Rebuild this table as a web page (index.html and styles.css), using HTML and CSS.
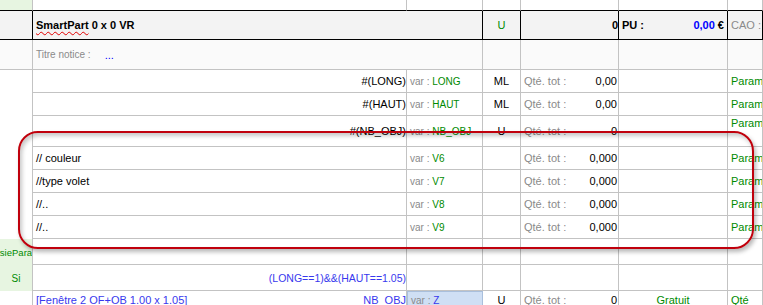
FILE: index.html
```html
<!DOCTYPE html>
<html>
<head>
<meta charset="utf-8">
<link rel="stylesheet" href="styles.css">
</head>
<body>
<div class="sheet">
  <!-- row 0 -->
  <div class="c r0 green"></div>
  <div class="c r0"></div>
  <div class="c r0"></div>
  <div class="c r0"></div>
  <div class="c r0"></div>
  <div class="c r0"></div>
  <div class="c r0"></div>

  <!-- row 1 -->
  <div class="c r1"></div>
  <div class="c r1 span2 title"><span class="squig">SmartPart</span>&nbsp;0 x 0 VR</div>
  <div class="c r1 center grn">U</div>
  <div class="c r1 right bold">0</div>
  <div class="c r1 pu"><span class="bold">PU :</span><span class="bold"><span class="blue">0,00</span> €</span></div>
  <div class="c r1 gray">CAO :</div>

  <!-- row 2 -->
  <div class="c r2"></div>
  <div class="c r2 span2"><span class="gray notice">Titre notice :</span><span class="blue dots">...</span></div>
  <div class="c r2"></div>
  <div class="c r2"></div>
  <div class="c r2"></div>
  <div class="c r2"></div>

  <!-- left column, rows 3-9 -->
  <div class="c lefta"></div>

  <!-- row 3 -->
  <div class="c right">#(LONG)</div>
  <div class="c var"><span class="gray">var :&nbsp;</span><span class="grn">LONG</span></div>
  <div class="c center">ML</div>
  <div class="c qty"><span class="gray">Qté. tot :</span><span>0,00</span></div>
  <div class="c"></div>
  <div class="c grn">Param</div>

  <!-- row 4 -->
  <div class="c right">#(HAUT)</div>
  <div class="c var"><span class="gray">var :&nbsp;</span><span class="grn">HAUT</span></div>
  <div class="c center">ML</div>
  <div class="c qty"><span class="gray">Qté. tot :</span><span>0,00</span></div>
  <div class="c"></div>
  <div class="c grn">Param</div>

  <!-- row 5 -->
  <div class="c right">#(NB_OBJ)</div>
  <div class="c var"><span class="gray">var :&nbsp;</span><span class="grn">NB_OBJ</span></div>
  <div class="c center">U</div>
  <div class="c qty"><span class="gray">Qté. tot :</span><span>0</span></div>
  <div class="c"></div>
  <div class="c grn top">Param</div>

  <!-- row 6 -->
  <div class="c">// couleur</div>
  <div class="c var"><span class="gray">var :&nbsp;</span><span class="grn">V6</span></div>
  <div class="c"></div>
  <div class="c qty"><span class="gray">Qté. tot :</span><span>0,000</span></div>
  <div class="c"></div>
  <div class="c grn">Param</div>

  <!-- row 7 -->
  <div class="c">//type volet</div>
  <div class="c var"><span class="gray">var :&nbsp;</span><span class="grn">V7</span></div>
  <div class="c"></div>
  <div class="c qty"><span class="gray">Qté. tot :</span><span>0,000</span></div>
  <div class="c"></div>
  <div class="c grn">Param</div>

  <!-- row 8 -->
  <div class="c">//..</div>
  <div class="c var"><span class="gray">var :&nbsp;</span><span class="grn">V8</span></div>
  <div class="c"></div>
  <div class="c qty"><span class="gray">Qté. tot :</span><span>0,000</span></div>
  <div class="c"></div>
  <div class="c grn">Param</div>

  <!-- row 9 -->
  <div class="c">//..</div>
  <div class="c var"><span class="gray">var :&nbsp;</span><span class="grn">V9</span></div>
  <div class="c"></div>
  <div class="c qty"><span class="gray">Qté. tot :</span><span>0,000</span></div>
  <div class="c"></div>
  <div class="c grn">Param</div>

  <!-- left column rows 10-11 -->
  <div class="c leftb green">
    <div class="lb lb-end"><span>SaisieParam</span></div>
    <div class="lb"><span>Si</span></div>
  </div>

  <!-- row 10 -->
  <div class="c"></div>
  <div class="c"></div>
  <div class="c"></div>
  <div class="c"></div>
  <div class="c"></div>
  <div class="c"></div>

  <!-- row 11 -->
  <div class="c right cond">(LONG==1)&amp;&amp;(HAUT==1.05)</div>
  <div class="c"></div>
  <div class="c"></div>
  <div class="c"></div>
  <div class="c"></div>
  <div class="c"></div>

  <!-- row 12 -->
  <div class="c"></div>
  <div class="c fen low"><span class="cond">[Fenêtre 2 OF+OB 1.00 x 1.05]</span><span class="cond">NB_OBJ</span></div>
  <div class="c var sel low"><span class="gray">var :&nbsp;</span><span class="cond">Z</span></div>
  <div class="c center low">U</div>
  <div class="c qty low"><span class="gray">Qté. tot :</span><span>0</span></div>
  <div class="c center grn low">Gratuit</div>
  <div class="c grn low">Qté</div>

  <div class="callout"></div>
</div>
</body>
</html>
```

FILE: styles.css
```css
html, body {
  margin: 0;
  padding: 0;
  background: #ffffff;
}

body {
  width: 763px;
  height: 305px;
  overflow: hidden;
  font-family: "Liberation Sans", Arial, sans-serif;
  font-size: 11px;
  color: #000;
}

.sheet {
  position: relative;
  display: grid;
  grid-template-columns: 33px 374px 76px 38px 98px 109px 35px;
  grid-template-rows: 11px 29px 30px 23px 23px 31px 23px 23px 23px 23px 26px 26px 24px;
  width: 763px;
  height: 305px;
  overflow: hidden;
}

.c {
  box-sizing: border-box;
  border-right: 1px solid #c3c3c3;
  border-bottom: 1px solid #c3c3c3;
  display: flex;
  align-items: center;
  padding: 0 3px;
  white-space: nowrap;
  overflow: hidden;
  min-width: 0;
}

.r0 {
  border-bottom: 1px solid #000;
}

.r1 {
  background: #f3f3f3;
  border-right: 1px solid #000;
  border-bottom: 1px solid #000;
}

.r2 {
  background: #fafafa;
}

.span2 {
  grid-column: span 2;
}

.green {
  background: #e7f5e1;
}

.lefta {
  grid-row: span 7;
  border-bottom: none;
}

.leftb {
  grid-row: span 2;
  flex-direction: column;
  align-items: stretch;
  padding: 0;
  border-bottom: none;
  color: #008a00;
  font-size: 10px;
}

.lb {
  flex: 1;
  display: flex;
  align-items: center;
  justify-content: center;
  overflow: hidden;
}

.lb span {
  flex: none;
}

.lb-end {
  justify-content: flex-end;
  font-size: 9.5px;
}

.lb-end span {
  margin-right: -8px;
}

.title {
  font-weight: bold;
  font-size: 11px;
}

.squig {
  text-decoration: underline wavy #e00000;
  text-decoration-thickness: 1px;
  text-underline-offset: 2px;
  text-decoration-skip-ink: none;
}

.bold {
  font-weight: bold;
}

.center {
  justify-content: center;
}

.right {
  justify-content: flex-end;
  padding-right: 0;
}

.c.top {
  align-items: flex-start;
  padding-top: 1px;
}

.gray {
  color: #8a8a8a;
}

.grn {
  color: #008a00;
}

.blue {
  color: #0000ff;
}

.cond {
  color: #3838ee;
}

.right.cond {
  font-size: 10.5px;
}

.notice {
  font-size: 10px;
}

.dots {
  margin-left: 14px;
}

.pu {
  justify-content: space-between;
}

.qty {
  justify-content: space-between;
  padding-right: 1px;
}

.var {
  font-size: 10px;
}

.fen {
  justify-content: space-between;
  padding-right: 0;
}

.sel {
  background: #cfdff4;
  border: 1px solid #a9bfdc;
}

.c.low {
  align-items: flex-start;
  padding-top: 3px;
}

.callout {
  position: absolute;
  left: 18px;
  top: 131px;
  width: 736px;
  height: 118px;
  box-sizing: border-box;
  border: 2px solid #c0000c;
  border-radius: 20px;
  box-shadow: 2px 3px 4px rgba(0, 0, 0, 0.28), inset 2px 3px 4px rgba(0, 0, 0, 0.22);
  pointer-events: none;
}
```
